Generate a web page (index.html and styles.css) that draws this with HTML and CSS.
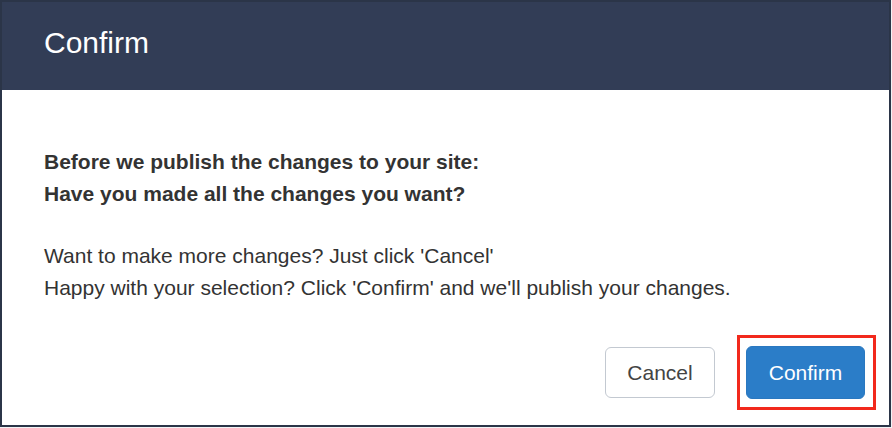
FILE: index.html
```html
<!DOCTYPE html>
<html lang="en">
<head>
<meta charset="utf-8">
<title>Confirm</title>
<link rel="stylesheet" href="styles.css">
</head>
<body>
<div class="modal">
  <div class="modal-header">
    <h1 class="modal-title">Confirm</h1>
  </div>
  <div class="modal-body">
    <p class="lead">Before we publish the changes to your site:<br>Have you made all the changes you want?</p>
    <p class="info">Want to make more changes? Just click 'Cancel'<br>Happy with your selection? Click 'Confirm' and we'll publish your changes.</p>
  </div>
  <div class="modal-footer">
    <button class="btn btn-cancel" type="button">Cancel</button>
    <span class="highlight"><button class="btn btn-confirm" type="button">Confirm</button></span>
  </div>
</div>
</body>
</html>
```
FILE: styles.css
```css
html, body {
  margin: 0;
  padding: 0;
}
body {
  background: #f2f3f5;
  font-family: "Liberation Sans", Arial, Helvetica, sans-serif;
  color: #333;
}
.modal {
  box-sizing: border-box;
  width: 891px;
  height: 427px;
  border: 2px solid #2b3548;
  background: #fff;
  display: flex;
  flex-direction: column;
}
.modal-header {
  box-sizing: border-box;
  height: 88px;
  background: #323d56;
  padding: 24px 42px 0;
}
.modal-title {
  margin: 0;
  font-size: 30px;
  line-height: 34px;
  font-weight: normal;
  color: #fff;
}
.modal-body {
  padding: 56px 42px 0;
  font-size: 21px;
  line-height: 32px;
}
.modal-body p {
  margin: 0;
}
.lead {
  font-weight: bold;
  color: #333;
}
.info {
  margin-top: 30px !important;
  color: #333;
}
.modal-footer {
  display: flex;
  justify-content: flex-end;
  align-items: center;
  gap: 22px;
  padding: 31px 13px 0 0;
}
.btn {
  font-family: "Liberation Sans", Arial, Helvetica, sans-serif;
  font-size: 21px;
  border-radius: 6px;
  cursor: pointer;
  padding: 0;
}
.btn-cancel {
  width: 110px;
  height: 51px;
  background: #fff;
  color: #444;
  border: 1px solid #c3c9d1;
}
.highlight {
  display: inline-flex;
  border: 3px solid #f2291c;
  padding: 8px 8px 8px 6px;
}
.btn-confirm {
  width: 119px;
  height: 53px;
  background: #2b7dc8;
  color: #fff;
  border: 1px solid #2a78c0;
}
```
